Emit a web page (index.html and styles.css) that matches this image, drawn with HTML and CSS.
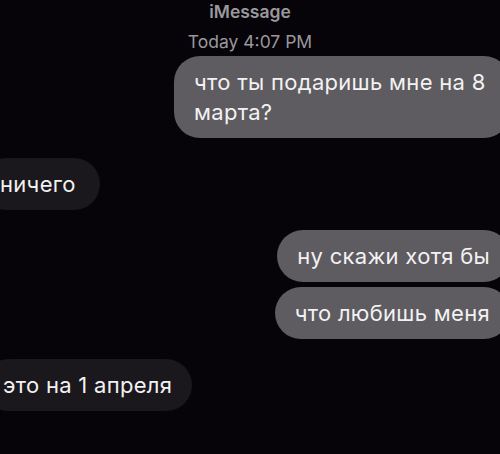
FILE: index.html
```html
<!DOCTYPE html>
<html lang="ru">
<head>
  <meta charset="UTF-8" />
  <title>iMessage</title>
  <link rel="stylesheet" href="styles.css">
</head>
<body>

  <div class="chat">
    <div class="chat-header">
      <div class="service">iMessage</div>
      <div class="stamp">Today 4:07 PM</div>
    </div>

    <div class="thread">
      <div class="bubble sent">что ты подаришь мне на 8 марта?</div>
      <div class="bubble received first">ничего</div>
      <div class="bubble sent first">ну скажи хотя бы</div>
      <div class="bubble sent">что любишь меня</div>
      <div class="bubble received first shifted">это на 1 апреля</div>
    </div>
  </div>

</body>
</html>
```

FILE: styles.css
```css
body {
  margin: 0;
  height: 100vh;
  overflow: hidden;
  background: #060408;
  color: #f2f2f2;
  font-family: Inter, 'Liberation Sans', Arial, sans-serif;
}

.chat {
  display: flex;
  flex-direction: column;
}

.chat-header {
  text-align: center;
  color: #9a989d;
  font-size: 17.5px;
  line-height: 20px;
  padding-top: 2px;
}
.service {
  font-weight: 600;
}
.stamp {
  margin-top: 10px;
}

.thread {
  display: flex;
  flex-direction: column;
  margin-top: 4px;
}

.bubble {
  padding: 11px 20px;
  font-size: 22px;
  letter-spacing: 0.3px;
  line-height: 30px;
  border-radius: 26px;
  margin-top: 5px;
}
.bubble.first {
  margin-top: 20px;
}
.thread .bubble:first-child {
  margin-top: 0;
}

.sent {
  align-self: flex-end;
  max-width: 296px;
  margin-right: -10px;
  background: #5e5b61;
}
.received {
  align-self: flex-start;
  margin-left: -20px;
  padding-right: 24px;
  background: #1b181d;
}
.received.shifted {
  margin-left: -17px;
  padding-right: 20px;
}
```
